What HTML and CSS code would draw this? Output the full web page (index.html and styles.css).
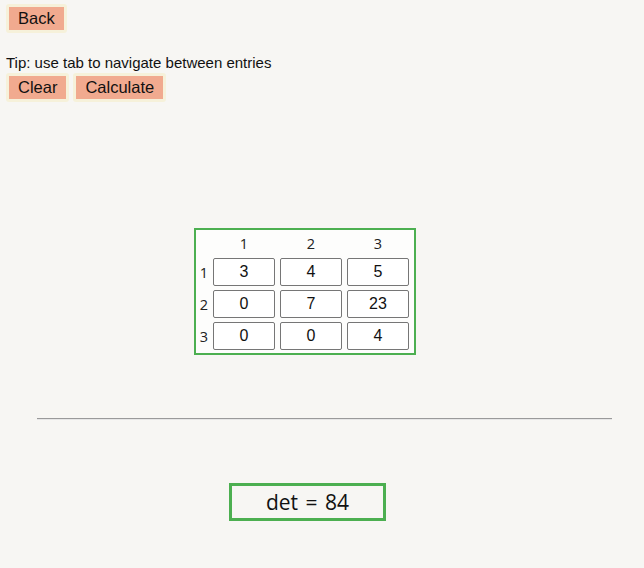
FILE: index.html
```html
<!DOCTYPE html>
<html>
<head>
<meta charset="utf-8">
<link rel="stylesheet" href="styles.css">
</head>
<body>
<div class="top">
  <button class="btn">Back</button>
</div>
<div class="tip">Tip: use tab to navigate between entries</div>
<div class="actions">
  <button class="btn">Clear</button>
  <button class="btn">Calculate</button>
</div>
<div class="matrix">
  <span></span>
  <span class="head">1</span>
  <span class="head">2</span>
  <span class="head">3</span>
  <span class="rowlab">1</span>
  <input class="cell" value="3">
  <input class="cell" value="4">
  <input class="cell" value="5">
  <span class="rowlab">2</span>
  <input class="cell" value="0">
  <input class="cell" value="7">
  <input class="cell" value="23">
  <span class="rowlab">3</span>
  <input class="cell" value="0">
  <input class="cell" value="0">
  <input class="cell" value="4">
</div>
<hr class="divider">
<div class="result">det = 84</div>
</body>
</html>
```

FILE: styles.css
```css
html, body {
  margin: 0;
  padding: 0;
  background: #f7f6f3;
}
body {
  padding: 4px 6px;
  font-family: "Liberation Sans", Arial, sans-serif;
  color: #111;
}
.btn {
  display: inline-block;
  box-sizing: border-box;
  height: 29px;
  padding: 0 9px;
  margin: 0;
  background: #f1aa8f;
  border: 3px solid #f6f1da;
  border-radius: 3px;
  font-family: "Liberation Sans", Arial, sans-serif;
  font-size: 16.5px;
  line-height: 23px;
  color: #111;
}
.top {
  height: 29px;
}
.tip {
  margin-top: 22px;
  font-size: 15px;
  line-height: 16px;
  height: 18px;
}
.actions {
  display: flex;
  gap: 4px;
}
.matrix {
  margin: 126px 0 0 188px;
  width: fit-content;
  display: grid;
  grid-template-columns: 12px 62px 62px 62px;
  grid-template-rows: 24px 28px 28px 28px;
  column-gap: 5px;
  row-gap: 4px;
  padding: 0 5px 3px 0;
  border: 2px solid #4caf50;
  background: #fdfdfc;
  font-family: "Open Sans", "Noto Sans", sans-serif;
  font-size: 14.5px;
}
.head {
  display: flex;
  align-items: flex-end;
  justify-content: center;
  padding-bottom: 1px;
  color: #222;
}
.rowlab {
  display: flex;
  align-items: center;
  justify-content: flex-end;
  color: #222;
}
.cell {
  box-sizing: border-box;
  width: 62px;
  height: 28px;
  margin: 0;
  padding: 0;
  border: 1px solid #767676;
  border-radius: 2px;
  background: #fff;
  text-align: center;
  font-family: "Liberation Sans", Arial, sans-serif;
  font-size: 16px;
  color: #111;
}
.divider {
  width: 575px;
  margin: 63px 0 0 31px;
  border: 0;
  border-top: 1px solid #9a9a9a;
  border-bottom: 1px solid #e6e6e6;
  height: 0;
}
.result {
  margin: 63px 0 0 223px;
  width: 151px;
  height: 32px;
  border: 3px solid #4caf50;
  text-align: center;
  font-family: "Open Sans", "Noto Sans", sans-serif;
  font-size: 21px;
  word-spacing: 2px;
  line-height: 32px;
  color: #111;
}
```
